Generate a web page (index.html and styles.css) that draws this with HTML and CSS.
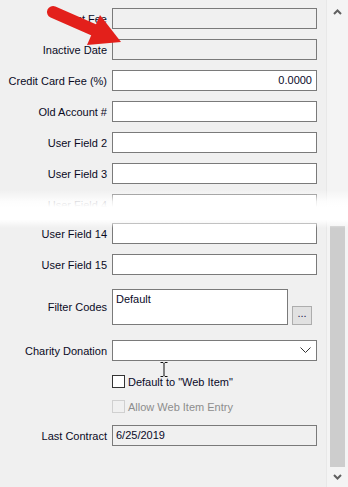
FILE: index.html
```html
<!DOCTYPE html>
<html lang="en">
<head>
    <meta charset="UTF-8">
    <meta name="viewport" content="width=device-width, initial-scale=1.0">
    <title>Customer Fields</title>
    <link rel="stylesheet" href="styles.css">
</head>
<body>
    <div class="window">
        <!-- Formulario -->
        <div class="form">
            <div class="row">
                <label class="caption">Last Fee</label>
                <div class="field disabled"></div>
            </div>
            <div class="row">
                <label class="caption">Inactive Date</label>
                <div class="field disabled"></div>
            </div>
            <div class="row">
                <label class="caption">Credit Card Fee (%)</label>
                <div class="field number">0.0000</div>
            </div>
            <div class="row">
                <label class="caption">Old Account #</label>
                <div class="field"></div>
            </div>
            <div class="row">
                <label class="caption">User Field 2</label>
                <div class="field"></div>
            </div>
            <div class="row">
                <label class="caption">User Field 3</label>
                <div class="field"></div>
            </div>
            <div class="row torn">
                <label class="caption">User Field 4</label>
                <div class="field"></div>
            </div>
            <div class="row">
                <label class="caption">User Field 14</label>
                <div class="field"></div>
            </div>
            <div class="row">
                <label class="caption">User Field 15</label>
                <div class="field"></div>
            </div>
            <div class="row tall">
                <label class="caption">Filter Codes</label>
                <div class="field memo">Default</div>
                <button class="ellipsis" type="button">...</button>
            </div>
            <div class="row combo-row">
                <label class="caption">Charity Donation</label>
                <div class="field combo">
                    <svg class="chevron" width="11" height="7" viewBox="0 0 11 7">
                        <polyline points="0.5,0.5 5.5,5.5 10.5,0.5" fill="none" stroke="#333" stroke-width="1"/>
                    </svg>
                </div>
            </div>
            <div class="check-row">
                <span class="box"></span>
                <span>Default to "Web Item"</span>
            </div>
            <div class="check-row off">
                <span class="box"></span>
                <span>Allow Web Item Entry</span>
            </div>
            <div class="row">
                <label class="caption">Last Contract</label>
                <div class="field readonly">6/25/2019</div>
            </div>

            <!-- Flecha y cursor encima -->
            <svg class="arrow" width="130" height="56" viewBox="0 0 130 56">
                <line x1="53" y1="12" x2="94" y2="30" stroke="#e3201b" stroke-width="12" stroke-linecap="round"/>
                <polygon points="121,42 87,45 100,15" fill="#e3201b"/>
            </svg>
            <svg class="ibeam" width="8" height="15" viewBox="0 0 8 15">
                <path d="M0.5 0.5h2.5l1 1 1-1h2.5M4 1.5v12M0.5 14.5h2.5l1-1 1 1h2.5" fill="none" stroke="#111" stroke-width="1"/>
            </svg>
            <div class="tear"></div>
        </div>

        <!-- Barra de desplazamiento -->
        <div class="scrollbar">
            <svg class="sb-arrow" width="9" height="6" viewBox="0 0 9 6">
                <polyline points="1,5 4.5,1.5 8,5" fill="none" stroke="#606060" stroke-width="2"/>
            </svg>
            <div class="track">
                <div class="thumb"></div>
            </div>
            <svg class="sb-arrow" width="9" height="6" viewBox="0 0 9 6">
                <polyline points="1,1 4.5,4.5 8,1" fill="none" stroke="#606060" stroke-width="2"/>
            </svg>
        </div>
    </div>
</body>
</html>
```

FILE: styles.css
```css
body {
    margin: 0;
    padding: 0;
    background-color: #f0f0f0;
    font-family: 'Liberation Sans', Arial, sans-serif;
    font-size: 11px;
    color: #000;
}
.window {
    display: flex;
    width: 348px;
    height: 487px;
    overflow: hidden;
}
.form {
    position: relative;
    flex: 1;
    padding-top: 8px;
}
.row {
    display: flex;
    align-items: center;
    height: 21px;
    margin-bottom: 10px;
}
.row.torn {
    margin-bottom: 8px;
}
.row.tall {
    height: 36px;
    margin-top: 14px;
    margin-bottom: 15px;
}
.caption {
    flex-shrink: 0;
    width: 112px;
    padding-right: 5px;
    box-sizing: border-box;
    text-align: right;
    white-space: nowrap;
    color: #0a0a1e;
}
.field {
    flex-shrink: 0;
    box-sizing: border-box;
    width: 205px;
    height: 21px;
    border: 1px solid #7a7a7a;
    background-color: #fff;
    padding: 0 4px 0 3px;
    line-height: 19px;
    color: #0a0a28;
}
.field.disabled,
.field.readonly {
    background-color: #f0f0f0;
}
.field.number {
    text-align: right;
}
.field.memo {
    width: 176px;
    height: 36px;
    line-height: 17px;
    padding-top: 1px;
}
.ellipsis {
    width: 20px;
    height: 19px;
    margin-left: 4px;
    margin-top: 16px;
    padding: 0 0 4px;
    border: 1px solid #adadad;
    background-color: #e1e1e1;
    color: #1a1a4a;
    font-family: inherit;
    font-size: 11px;
    line-height: 1;
}
.field.combo {
    display: flex;
    justify-content: flex-end;
    align-items: center;
    padding-right: 5px;
}
.combo-row {
    margin-bottom: 14px;
}
.check-row {
    display: flex;
    align-items: center;
    gap: 3px;
    height: 13px;
    margin-left: 112px;
    margin-bottom: 12px;
    color: #0a0a28;
}
.check-row .box {
    width: 11px;
    height: 11px;
    border: 1px solid #333;
    background-color: #fff;
}
.check-row.off {
    color: #8d8d8d;
}
.check-row.off .box {
    border-color: #d0d0d0;
    background-color: #f0f0f0;
}
.arrow {
    position: absolute;
    left: 0;
    top: 0;
}
.ibeam {
    position: absolute;
    left: 160px;
    top: 362px;
}
.tear {
    position: absolute;
    left: 0;
    top: 190px;
    width: 348px;
    height: 38px;
    background: linear-gradient(to bottom, rgba(255,255,255,0) 0%, rgba(255,255,255,0.85) 30%, #fff 45%, #fff 78%, rgba(255,255,255,0) 100%);
}
.scrollbar {
    display: flex;
    flex-direction: column;
    align-items: center;
    width: 21px;
    background-color: #f4f4f4;
    border-left: 1px solid #e8e8e8;
}
.sb-arrow {
    margin: 9px 0 6px;
}
.track {
    flex: 1;
    width: 100%;
    display: flex;
    justify-content: center;
    padding-top: 205px;
    padding-bottom: 3px;
}
.thumb {
    width: 15px;
    background-color: #cdcdcd;
}
.scrollbar .sb-arrow:last-child {
    margin: 4px 0 7px;
}
```
